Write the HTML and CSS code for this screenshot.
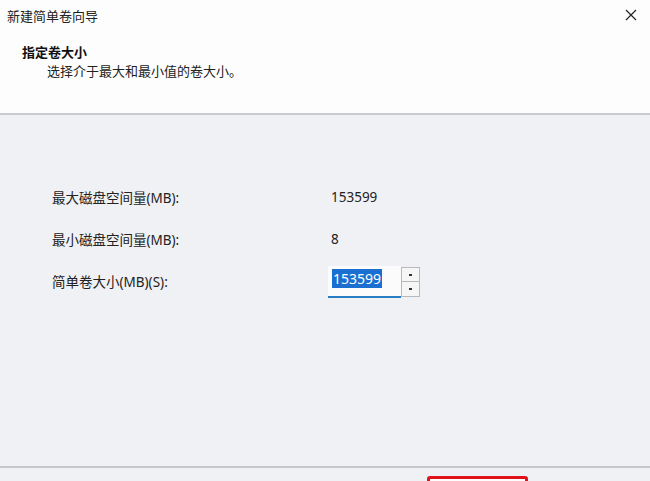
FILE: index.html
```html
<!DOCTYPE html>
<html lang="zh-CN">
<head>
<meta charset="utf-8">
<title>新建简单卷向导</title>
<link rel="stylesheet" href="styles.css">
</head>
<body>
<div class="window">
  <div class="top">
    <div class="titlebar">
      <span class="title">新建简单卷向导</span>
      <span class="close">
        <svg width="12" height="12" viewBox="0 0 12 12"><path d="M1 1 L11 11 M11 1 L1 11" stroke="#222" stroke-width="1.2" fill="none"/></svg>
      </span>
    </div>
    <div class="header">
      <div class="h-title">指定卷大小</div>
      <div class="h-sub">选择介于最大和最小值的卷大小。</div>
    </div>
  </div>
  <div class="content">
    <div class="grid">
      <div class="label">最大磁盘空间量(MB):</div>
      <div class="value">153599</div>
      <div class="label">最小磁盘空间量(MB):</div>
      <div class="value">8</div>
      <div class="label">简单卷大小(MB)(S):</div>
      <div class="value">
        <div class="spinner">
          <div class="input"><span class="sel">153599</span></div>
          <div class="spins">
            <div class="spin up"><span class="dot"></span></div>
            <div class="spin down"><span class="dot"></span></div>
          </div>
        </div>
      </div>
    </div>
  </div>
  <div class="footer">
    <div class="btn-row">
      <div class="btn"></div>
    </div>
  </div>
</div>
</body>
</html>
```
FILE: styles.css
```css
* { box-sizing: border-box; }
html, body { margin: 0; padding: 0; }
body {
  width: 650px;
  height: 481px;
  overflow: hidden;
  font-family: "Noto Sans", "Noto Sans CJK SC", sans-serif;
  font-size: 13px;
  color: #1a1a1a;
  background: #f0f1f4;
}
.window {
  display: flex;
  flex-direction: column;
  height: 481px;
}
.top {
  flex-shrink: 0;
  background: #fdfdfd;
  border-bottom: 2px solid #c9cacd;
  height: 115px;
}
.titlebar {
  height: 30px;
  display: flex;
  align-items: center;
  justify-content: space-between;
  padding: 0 13px 0 7px;
}
.title { font-size: 13px; color: #222; }
.close { display: flex; align-items: center; }
.header {
  padding: 13px 0 0 22px;
}
.h-title {
  font-weight: bold;
  font-size: 13px;
  line-height: 19px;
  color: #111;
}
.h-sub {
  padding-left: 25px;
  line-height: 19px;
  color: #222;
}
.content {
  flex-shrink: 0;
  height: 351px;
  padding: 66px 0 0 52px;
  background: #f0f1f4;
}
.grid {
  display: grid;
  grid-template-columns: 279px auto;
  grid-auto-rows: 32px;
  row-gap: 10px;
  align-items: center;
}
.label { color: #222; font-size: 13.5px; }
.value { color: #222; font-size: 13.5px; }
.spinner {
  display: flex;
  align-items: flex-start;
  margin-left: -3px;
  margin-top: 2px;
}
.input {
  width: 73px;
  height: 32px;
  background: #fbfbfb;
  border-bottom: 2px solid #2a7fc4;
  padding: 3px 0 0 4px;
}
.sel {
  display: inline-block;
  background: #1a6fd0;
  color: #fff;
  line-height: 19px;
  padding: 0 1px;
  font-size: 14px;
}
.spins {
  display: flex;
  flex-direction: column;
  margin-top: 1px;
}
.spin {
  width: 19px;
  height: 15px;
  border: 1px solid #b9b9b9;
  background: #f6f6f6;
  display: flex;
  align-items: center;
  justify-content: center;
}
.spin.down { border-top: none; }
.dot {
  width: 3px;
  height: 2px;
  background: #333;
}
.footer {
  flex: 1;
  border-top: 2px solid #c6c7ca;
  background: #f0f1f4;
  padding: 8px 0 0 427px;
}
.btn {
  width: 101px;
  height: 20px;
  border: 3px solid #e0131b;
  border-radius: 3px;
  background: #fdfdfd;
}
```
